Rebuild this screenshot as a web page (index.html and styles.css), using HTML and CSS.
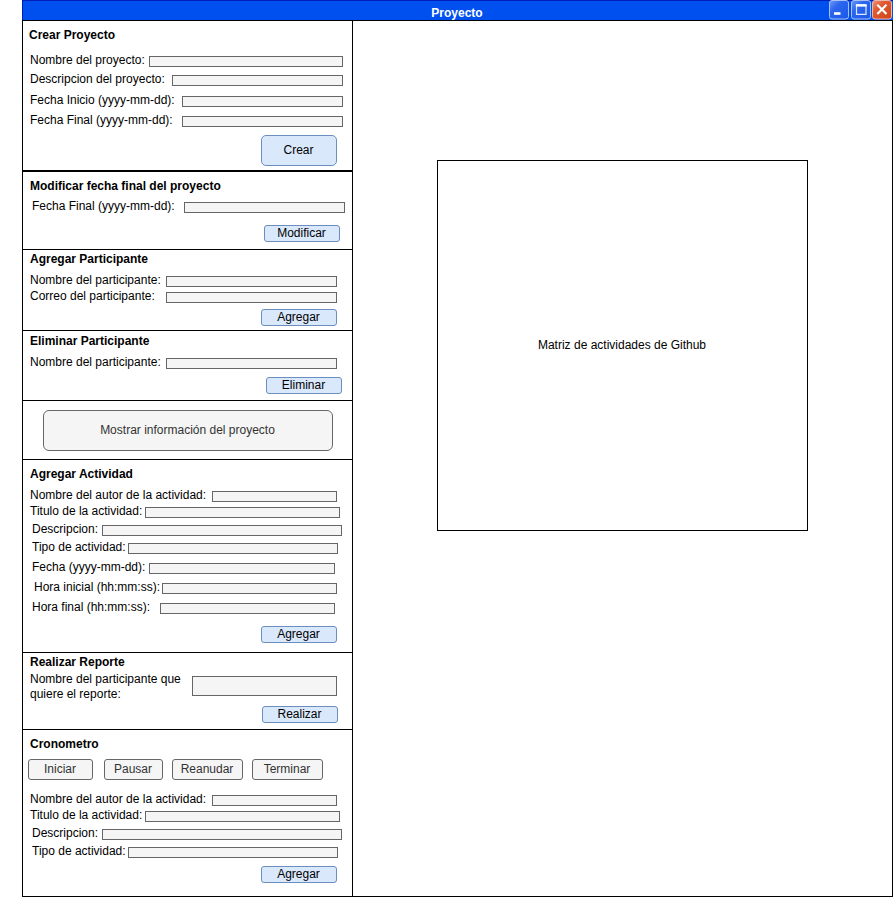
FILE: index.html
```html
<!DOCTYPE html>
<html lang="es">
<head>
<meta charset="utf-8">
<title>Proyecto</title>
<link rel="stylesheet" href="styles.css">
</head>
<body>
<div class="window">
  <header class="titlebar">
    <h1 class="titlebar-text">Proyecto</h1>
    <div class="controls">
      <svg class="control" width="20" height="20" viewBox="0 0 20 20">
        <defs>
          <linearGradient id="blue" x1="0" y1="0" x2="1" y2="1"><stop offset="0" stop-color="#6f9bf7"/><stop offset=".35" stop-color="#2c66ee"/><stop offset="1" stop-color="#1a58e6"/></linearGradient>
          <linearGradient id="red" x1="0" y1="0" x2="1" y2="1"><stop offset="0" stop-color="#ee9678"/><stop offset=".35" stop-color="#e05a34"/><stop offset="1" stop-color="#cf4416"/></linearGradient>
        </defs>
        <rect x=".5" y=".5" width="19" height="18.5" rx="2.5" fill="url(#blue)" stroke="#a9c0f5"/>
        <path d="M5 13.5h6.5" stroke="#fff" stroke-width="2.6"/>
      </svg>
      <svg class="control" width="20" height="20" viewBox="0 0 20 20">
        <rect x=".5" y=".5" width="19" height="18.5" rx="2.5" fill="url(#blue)" stroke="#a9c0f5"/>
        <path d="M5.5 5h9.5v9.3H5.5z" fill="none" stroke="#dce7ff" stroke-width="1.2"/>
        <path d="M4.9 5.4h10.7" stroke="#fff" stroke-width="2.4"/>
      </svg>
      <svg class="control" width="20" height="20" viewBox="0 0 20 20">
        <rect x=".5" y=".5" width="19" height="18.5" rx="2.5" fill="url(#red)" stroke="#eab9ac"/>
        <path d="M5.3 4.8l9.2 9.3M14.5 4.8L5.3 14.1" stroke="#fff" stroke-width="2.1"/>
      </svg>
    </div>
  </header>
  <div class="content">
    <aside class="sidebar">
      <section class="panel panel-create">
        <h2>Crear Proyecto</h2>
        <div class="field name"><label>Nombre del proyecto:</label><span class="input"></span></div>
        <div class="field desc"><label>Descripcion del proyecto:</label><span class="input"></span></div>
        <div class="field start"><label>Fecha Inicio (yyyy-mm-dd):</label><span class="input"></span></div>
        <div class="field end"><label>Fecha Final (yyyy-mm-dd):</label><span class="input"></span></div>
        <button class="btn btn-tall">Crear</button>
      </section>
      <section class="panel panel-modify">
        <h2>Modificar fecha final del proyecto</h2>
        <div class="field end"><label>Fecha Final (yyyy-mm-dd):</label><span class="input"></span></div>
        <button class="btn">Modificar</button>
      </section>
      <section class="panel panel-add">
        <h2>Agregar Participante</h2>
        <div class="field name"><label>Nombre del participante:</label><span class="input"></span></div>
        <div class="field mail"><label>Correo del participante:</label><span class="input"></span></div>
        <button class="btn">Agregar</button>
      </section>
      <section class="panel panel-remove">
        <h2>Eliminar Participante</h2>
        <div class="field name"><label>Nombre del participante:</label><span class="input"></span></div>
        <button class="btn">Eliminar</button>
      </section>
      <section class="panel panel-info">
        <button class="btn-gray btn-info">Mostrar información del proyecto</button>
      </section>
      <section class="panel panel-activity">
        <h2>Agregar Actividad</h2>
        <div class="field author"><label>Nombre del autor de la actividad:</label><span class="input"></span></div>
        <div class="field title"><label>Titulo de la actividad:</label><span class="input"></span></div>
        <div class="field about"><label>Descripcion:</label><span class="input"></span></div>
        <div class="field kind"><label>Tipo de actividad:</label><span class="input"></span></div>
        <div class="field date"><label>Fecha (yyyy-mm-dd):</label><span class="input"></span></div>
        <div class="field from"><label>Hora inicial (hh:mm:ss):</label><span class="input"></span></div>
        <div class="field to"><label>Hora final (hh:mm:ss):</label><span class="input"></span></div>
        <button class="btn">Agregar</button>
      </section>
      <section class="panel panel-report">
        <h2>Realizar Reporte</h2>
        <div class="field who"><label>Nombre del participante que<br>quiere el reporte:</label><span class="input"></span></div>
        <button class="btn">Realizar</button>
      </section>
      <section class="panel panel-timer">
        <h2>Cronometro</h2>
        <div class="timer-buttons">
          <button class="btn-gray b-start">Iniciar</button>
          <button class="btn-gray b-pause">Pausar</button>
          <button class="btn-gray b-resume">Reanudar</button>
          <button class="btn-gray b-stop">Terminar</button>
        </div>
        <div class="field author"><label>Nombre del autor de la actividad:</label><span class="input"></span></div>
        <div class="field title"><label>Titulo de la actividad:</label><span class="input"></span></div>
        <div class="field about"><label>Descripcion:</label><span class="input"></span></div>
        <div class="field kind"><label>Tipo de actividad:</label><span class="input"></span></div>
        <button class="btn">Agregar</button>
      </section>
    </aside>
    <main class="main">
      <div class="matrix">Matriz de actividades de Github</div>
    </main>
  </div>
</div>
</body>
</html>
```
FILE: styles.css
```css
* { box-sizing: border-box; }
body {
  margin: 0;
  background: #fff;
  color: #000;
  font: 12px/14px "Liberation Sans", Arial, sans-serif;
}
.window {
  width: 871px;
  height: 897px;
  margin-left: 22px;
  display: flex;
  flex-direction: column;
}
.titlebar {
  height: 20px;
  flex: none;
  display: flex;
  justify-content: center;
  background: #0050f0;
  border-top: 1px solid #001dbc;
  border-left: 1px solid #001dbc;
  padding-right: 2px;
  position: relative;
}
.titlebar-text {
  margin: 5px 0 0;
  font-size: 12px;
  line-height: 14px;
  color: #fff;
}
.controls {
  position: absolute;
  right: 1px;
  top: -1px;
  display: flex;
  gap: 1.5px;
}
.control { display: block; }
.content {
  flex: 1;
  display: flex;
  border: 1px solid #000;
}
.sidebar {
  width: 330px;
  border-right: 1px solid #000;
}
.panel {
  border-bottom: 1px solid #000;
  display: flex;
  flex-direction: column;
  overflow: hidden;
}
h2 {
  margin: 0 0 0 7px;
  font-size: 12px;
  line-height: 14px;
}
.field {
  display: flex;
  justify-content: space-between;
  height: 14px;
  flex: none;
  padding-left: 7px;
  white-space: nowrap;
}
.input {
  flex: none;
  height: 11px;
  margin-top: 3px;
  background: #f5f5f5;
  border: 1px solid #666;
}
button {
  font: inherit;
  padding: 0 1px 1px 0;
}
.btn {
  width: 76px;
  height: 17px;
  flex: none;
  align-self: flex-end;
  margin-right: 15px;
  background: #dae8fc;
  border: 1px solid #6c8ebf;
  border-radius: 3px;
  color: #000;
}
.btn-tall { height: 31px; border-radius: 5px; }
.btn-gray {
  background: #f5f5f5;
  border: 1px solid #666;
  border-radius: 3px;
  color: #333;
}

.panel-create { height: 151px; padding-top: 7px; border-bottom-width: 2px; }
.panel-create h2 { margin-left: 6px; }
.panel-create .field { padding-right: 9px; }
.panel-create .name { margin-top: 11px; }
.panel-create .name .input { width: 194px; }
.panel-create .desc { margin-top: 5px; }
.panel-create .desc .input { width: 171px; }
.panel-create .start { margin-top: 7px; }
.panel-create .end { margin-top: 6px; }
.panel-create .start .input, .panel-create .end .input { width: 161px; }
.panel-create .btn { margin-top: 8px; }

.panel-modify { height: 78px; padding-top: 7px; }
.panel-modify .field { margin-top: 6px; padding: 0 7px 0 9px; }
.panel-modify .input { width: 161px; }
.panel-modify .btn { margin: 12px 12px 0 0; }

.panel-add { height: 81px; padding-top: 2px; }
.panel-add .field, .panel-remove .field { padding-right: 15px; }
.panel-add .input, .panel-remove .input { width: 171px; }
.panel-add .name { margin-top: 7px; }
.panel-add .mail { margin-top: 2px; }
.panel-add .btn { margin-top: 6px; }

.panel-remove { height: 70px; padding-top: 3px; }
.panel-remove .field { margin-top: 7px; }
.panel-remove .btn { margin: 8px 10px 0 0; }

.panel-info { height: 59px; padding: 9px 0 0 20px; }
.btn-info { width: 290px; height: 41px; border-radius: 6px; }

.author { padding-right: 15px; }
.author .input { width: 125px; }
.title { margin-top: 2px; padding-right: 12px; }
.title .input { width: 195px; }
.about { margin-top: 4px; padding: 0 10px 0 9px; }
.about .input { width: 240px; }
.kind { margin-top: 4px; padding: 0 14px 0 9px; }
.kind .input { width: 210px; }
.date { margin-top: 6px; padding: 0 17px 0 9px; }
.date .input { width: 186px; }
.from { margin-top: 6px; padding: 0 15px 0 11px; }
.from .input { width: 175px; }
.to { margin-top: 6px; padding: 0 17px 0 9px; }
.to .input { width: 175px; }

.panel-activity { height: 193px; padding-top: 7px; }
.panel-activity .author { margin-top: 7px; }
.panel-activity .btn { margin-top: 12px; }

.panel-report { height: 77px; padding-top: 2px; }
.who { height: 30px; margin-top: 3px; padding-right: 15px; line-height: 15px; }
.who .input { width: 145px; height: 20px; margin-top: 4px; }
.panel-report .btn { margin: 4px 14px 0 0; }

.panel-timer { height: 165px; padding-top: 7px; border-bottom: 0; }
.timer-buttons { display: flex; margin: 8px 0 0 5px; }
.timer-buttons .btn-gray { height: 21px; }
.b-start { width: 65px; margin-right: 11px; }
.b-pause { width: 59px; margin-right: 9px; }
.b-resume { width: 71px; margin-right: 9px; }
.b-stop { width: 71px; }
.panel-timer .author { margin-top: 12px; }
.panel-timer .btn { margin-top: 8px; }

.main { flex: 1; padding: 139px 0 0 84px; }
.matrix {
  width: 371px;
  height: 371px;
  border: 1px solid #000;
  display: flex;
  align-items: center;
  justify-content: center;
  padding: 0 1px 1px 0;
}
```
